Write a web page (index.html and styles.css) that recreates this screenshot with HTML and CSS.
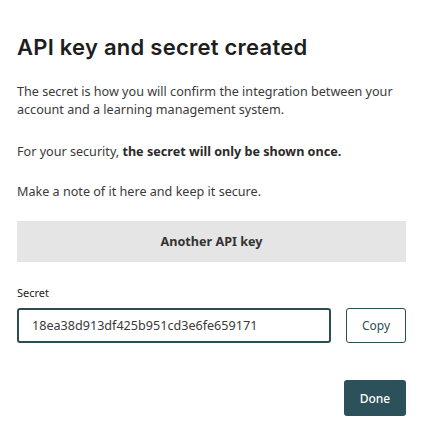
FILE: index.html
```html
<!DOCTYPE html>
<html>
<head>
<meta charset="utf-8">
<link rel="stylesheet" href="styles.css">
</head>
<body>
<div class="dialog">
  <h1 class="title">API key and secret created</h1>
  <p class="text text-first">The secret is how you will confirm the integration between your account and a learning management system.</p>
  <p class="text">For your security, <strong>the secret will only be shown once.</strong></p>
  <p class="text text-last">Make a note of it here and keep it secure.</p>
  <button class="btn-another">Another API key</button>
  <label class="label">Secret</label>
  <div class="secret-row">
    <div class="secret-input">18ea38d913df425b951cd3e6fe659171</div>
    <button class="btn-copy">Copy</button>
  </div>
  <div class="footer">
    <button class="btn-done">Done</button>
  </div>
</div>
</body>
</html>
```
FILE: styles.css
```css
* { box-sizing: border-box; }
html, body { margin: 0; padding: 0; background: #fff; }
body { font-family: "Noto Sans", "Open Sans", sans-serif; color: #333; }
.dialog { padding: 32px 19px 0 17px; display: flex; flex-direction: column; }
.title { font-family: "Inter", "Lato", sans-serif; font-weight: 600; font-size: 22px; line-height: 30px; margin: 0 0 21px 0; color: #1e1e1e; letter-spacing: 0.25px; }
.text { font-size: 12.6px; line-height: 18px; margin: 0 0 22px 0; color: #3a3a3a; }
.text-first { margin-bottom: 24px; }
.text-last { margin-bottom: 19px; }
.text strong { font-weight: 700; color: #2a2a2a; }
.btn-another { border: none; background: #e5e5e5; height: 41px; font-family: inherit; font-size: 12.6px; font-weight: 700; color: #333; margin: 1px 0 0 0; border-radius: 0; }
.label { font-size: 11px; line-height: 15px; margin-top: 23px; color: #222; }
.secret-row { display: flex; gap: 15px; margin-top: 8px; }
.secret-input { flex: 1; height: 35px; border: 2px solid #2c4d55; border-radius: 3px; font-size: 12.6px; line-height: 31px; padding-left: 13px; color: #3a3a3a; }
.btn-copy { width: 60px; height: 35px; background: #fff; border: 1px solid #2c4d55; border-radius: 3px; font-family: inherit; font-size: 12px; color: #2c4d55; }
.footer { display: flex; justify-content: flex-end; margin-top: 37px; }
.btn-done { width: 62px; height: 36px; background: #2c515a; color: #fff; border: none; border-radius: 3px; font-family: inherit; font-size: 12px; font-weight: 500; }
```
